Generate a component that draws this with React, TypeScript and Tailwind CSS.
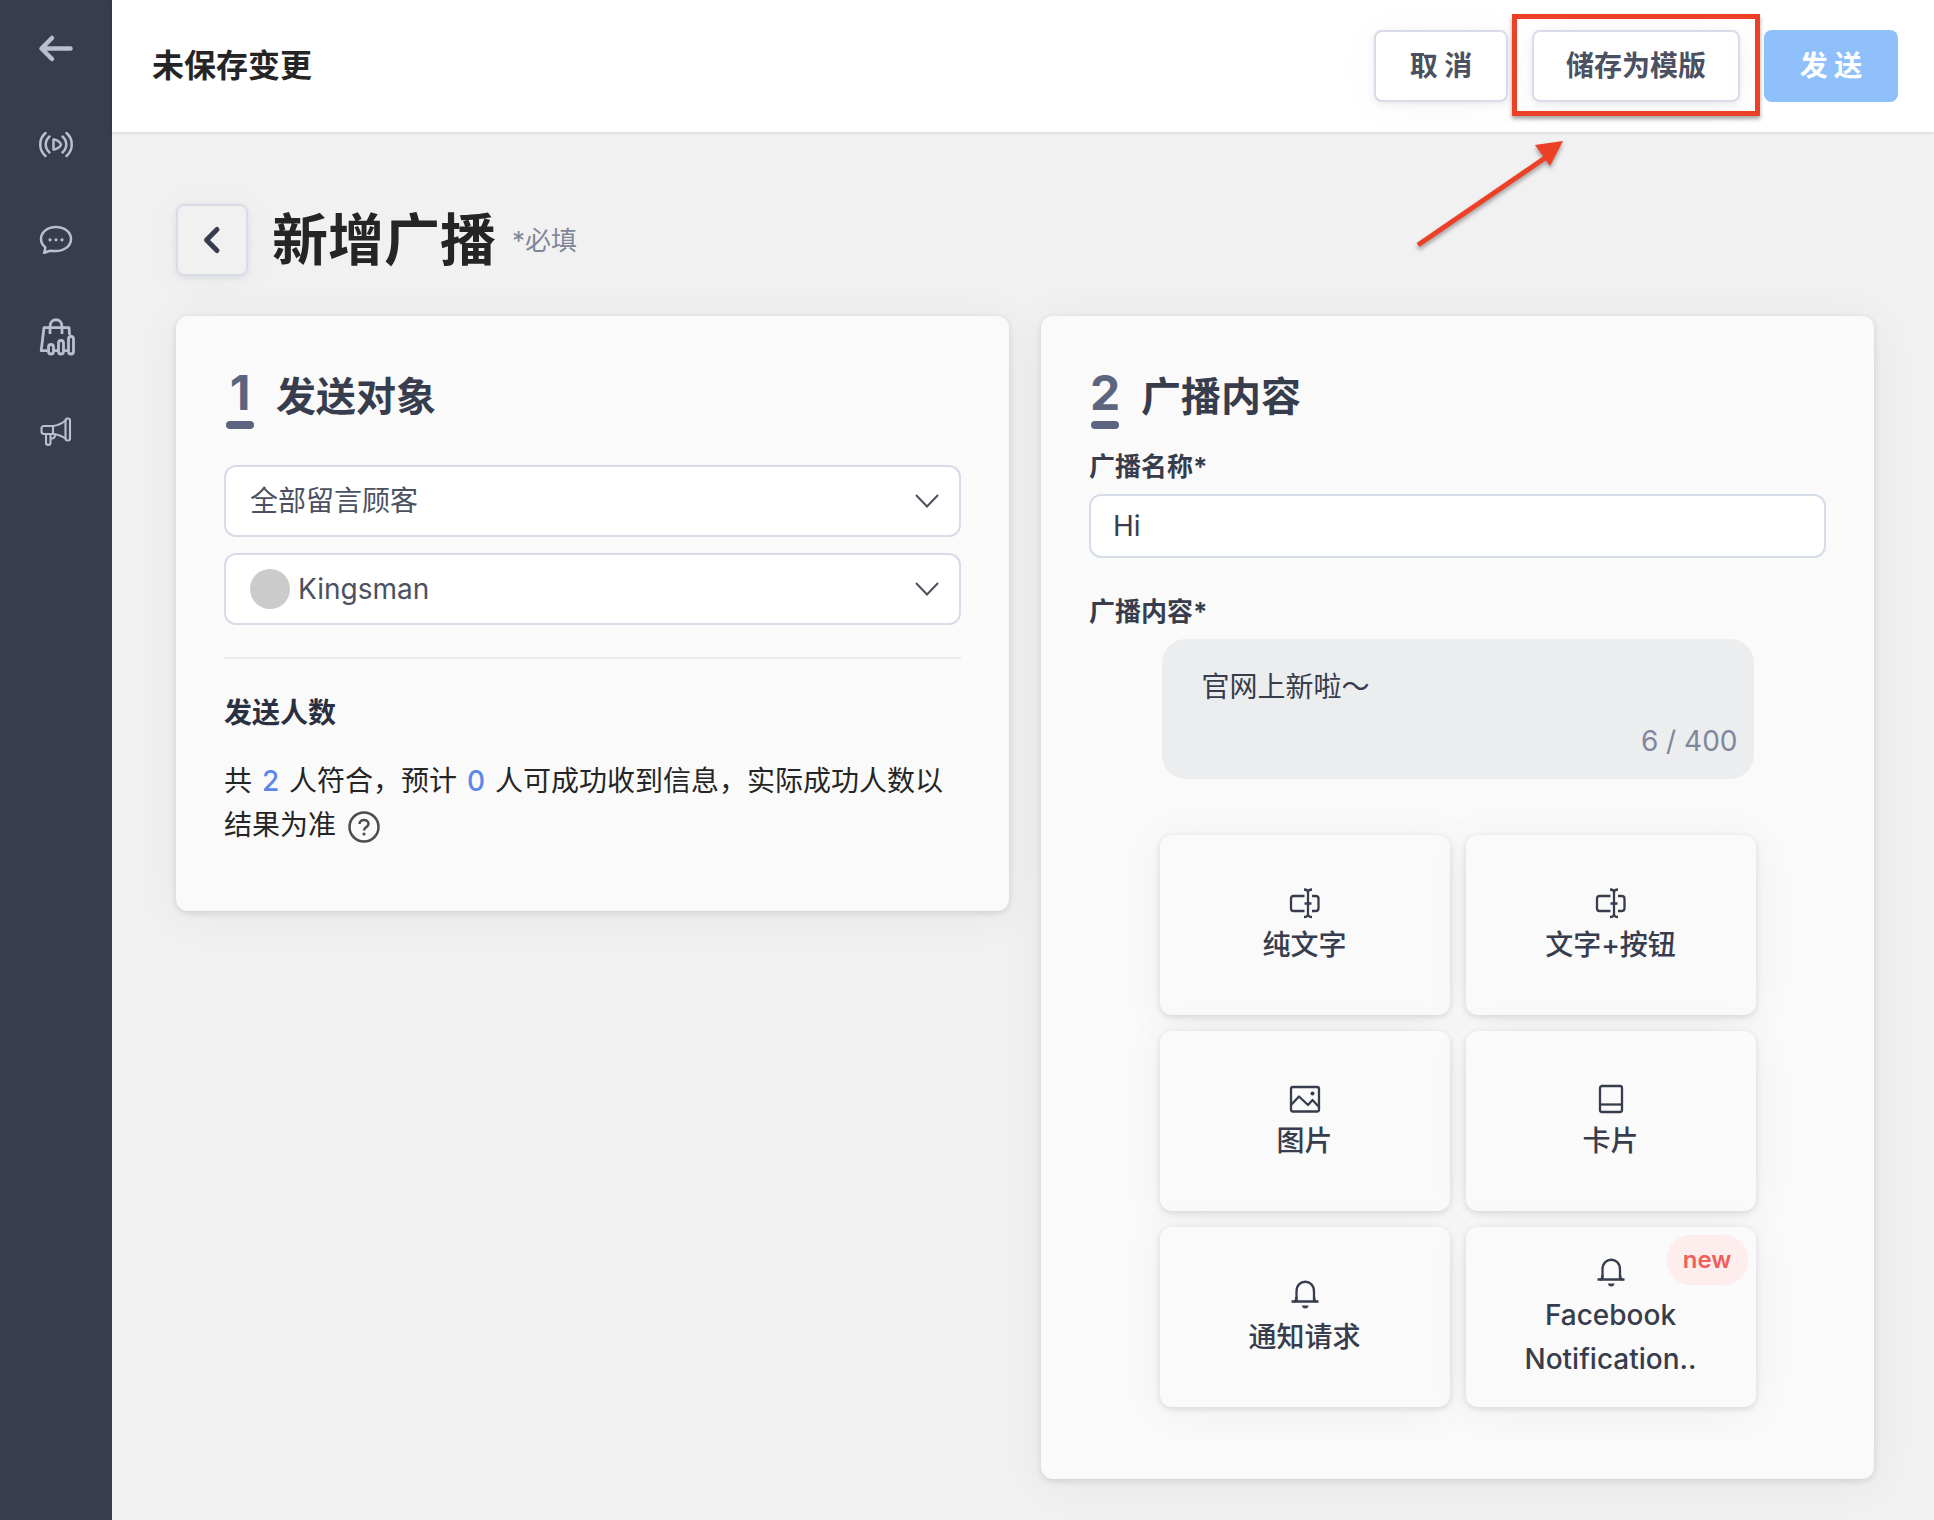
import type { ReactNode } from "react";

const cardShadow =
  "shadow-[0_2px_6px_rgba(40,44,56,0.14),0_4px_48px_rgba(40,44,56,0.05)]";
const buttonShadow =
  "shadow-[0_2px_6px_rgba(60,70,120,0.10),0_4px_48px_rgba(40,44,56,0.03)]";

function SideIcon({ children }: { children: ReactNode }) {
  return (
    <svg
      viewBox="0 0 40 40"
      className="size-10"
      fill="none"
      stroke="currentColor"
      strokeWidth="2.5"
      strokeLinecap="round"
      strokeLinejoin="round"
      aria-hidden="true"
    >
      {children}
    </svg>
  );
}

const navItems = [
  {
    label: "返回",
    icon: (
      <SideIcon>
        <path d="M16 10L5.5 20.5L16 31M6 20.5H34.5" strokeWidth="4.5" />
      </SideIcon>
    ),
  },
  {
    label: "直播",
    icon: (
      <SideIcon>
        <path d="M9.5 9C2.5 15 2.5 26 9.5 32M13.5 12.5C8.5 17 8.5 24 13.5 28.5" />
        <path d="M30.5 9C37.5 15 37.5 26 30.5 32M26.5 12.5C31.5 17 31.5 24 26.5 28.5" />
        <path d="M17.5 15.5V25.5C19.5 26 25 22.5 25 20.5S19.5 15 17.5 15.5Z" />
      </SideIcon>
    ),
  },
  {
    label: "聊天",
    icon: (
      <SideIcon>
        <path d="M8 32.8C8.8 31.2 9.3 29.3 9.3 27.3C6.5 25 5 22 5 19C5 12 11.7 7 20 7S35 12 35 19S28.3 31 20 31C18 31 16.3 30.8 14.6 30.8C12.5 31 10.5 32.3 8 32.8Z" />
        <g fill="currentColor" stroke="none">
          <circle cx="14" cy="19.8" r="1.6" />
          <circle cx="20" cy="19.8" r="1.6" />
          <circle cx="26" cy="19.8" r="1.6" />
        </g>
      </SideIcon>
    ),
  },
  {
    label: "商店",
    icon: (
      <SideIcon>
        <g strokeWidth="2.8" strokeLinecap="butt">
          <path d="M11.5 34.7H5.2L8 11.7H33L33.6 19M18 34.7H22M28 34.7H32" />
          <path d="M14 18V10.5C14 1.5 26 1.5 26 10.5V18" />
          <rect x="12.5" y="28.5" width="5" height="9.5" rx="2.5" />
          <rect x="22.5" y="24.5" width="5" height="13.5" rx="2.5" />
          <rect x="32.5" y="20.5" width="5" height="17.5" rx="2.5" />
        </g>
      </SideIcon>
    ),
  },
  {
    label: "推广",
    icon: (
      <SideIcon>
        <g strokeWidth="2.1">
          <path d="M17 14H8C6.5 14 5.5 15 5.5 16.5V19.5C5.5 21 6.5 22 8 22H17Z" />
          <path d="M17 14C22 13.5 26 11.5 29.5 8.5M17 22C22 22.5 26 24 29.5 26.5" />
          <rect x="29.5" y="6.5" width="4.5" height="22" rx="2" />
          <path d="M10 22V31C10 33.5 14.5 33.5 14.5 31V22M14.5 26.5H16C18 26.5 19 25 19 22.5" />
        </g>
      </SideIcon>
    ),
  },
];

function TileIcon({ children }: { children: ReactNode }) {
  return (
    <svg
      viewBox="0 0 32 32"
      className="size-8"
      fill="none"
      stroke="currentColor"
      strokeWidth="2.3"
      strokeLinejoin="round"
      aria-hidden="true"
    >
      {children}
    </svg>
  );
}

const textIcon = (
  <TileIcon>
    <path d="M15.5 9H4.5C3 9 2 10 2 11.5V21.5C2 23 3 24 4.5 24H15.5" />
    <path d="M23 9H26.5C28.5 9 29.5 10 29.5 11.5V21.5C29.5 23 28.5 24 26.5 24H23" />
    <path d="M19 5V28M15.5 16.5H22.5M15 2.5C17.5 2.5 19 3.5 19 5.5C19 3.5 20.5 2.5 23 2.5M15 30C17.5 30 19 29 19 27C19 29 20.5 30 23 30" />
  </TileIcon>
);

const bellIcon = (
  <TileIcon>
    <path d="M7.5 22V12.5C7.5 -0.5 25 -0.5 25 12.5V22M2.5 22.5H29.5" />
    <path d="M5 23C7 22 7.5 20 7.5 18M27.5 23C25.5 22 25 20 25 18" />
    <path d="M13 26.5H19.5C19.5 30.5 13 30.5 13 26.5Z" fill="currentColor" stroke="none" />
  </TileIcon>
);

const tiles = [
  { label: "纯文字", icon: textIcon },
  { label: "文字+按钮", icon: textIcon },
  {
    label: "图片",
    icon: (
      <TileIcon>
        <rect x="2" y="4" width="28" height="24.5" rx="2" />
        <path d="M2 22L10 13.5L19 22L23.5 17L30 24" />
        <circle cx="23.5" cy="10.5" r="2" fill="currentColor" stroke="none" />
      </TileIcon>
    ),
  },
  {
    label: "卡片",
    icon: (
      <TileIcon>
        <rect x="5" y="3" width="22" height="26" rx="2" />
        <path d="M5 21.5H27" />
      </TileIcon>
    ),
  },
  { label: "通知请求", icon: bellIcon },
  { label: "Facebook Notification..", icon: bellIcon, isNew: true },
];

function StepHeading({ step, title }: { step: string; title: string }) {
  return (
    <div className="flex items-start gap-5">
      <div className="flex w-8 flex-col items-center">
        <span className="text-5xl leading-14 font-bold text-[#5b6580]">
          {step}
        </span>
        <span className="h-2 w-7 rounded-full bg-[#5b6580]" />
      </div>
      <h2 className="text-[40px] leading-16 font-bold">{title}</h2>
    </div>
  );
}

function Chevron() {
  return (
    <svg
      viewBox="0 0 24 14"
      className="pointer-events-none absolute top-1/2 right-[22px] h-3.5 w-6 -translate-y-1/2"
      fill="none"
      stroke="#4b5160"
      strokeWidth="2"
      aria-hidden="true"
    >
      <path d="M1 1L12 12.5L23 1" />
    </svg>
  );
}

const selectClass =
  "h-18 w-full appearance-none rounded-xl border-2 border-[#d8dbe8] bg-white pr-16 text-[#4b5160]";

export default function App() {
  return (
    <div className="flex min-h-screen bg-[#f1f1f1] font-['Inter','Noto_Sans_CJK_SC',sans-serif] text-[28px] text-[#373d4c]">
      <nav className="w-28 shrink-0 bg-[#373d4c] text-[#b9bfcf]">
        {navItems.map((item) => (
          <a
            key={item.label}
            href="#"
            aria-label={item.label}
            className="flex h-24 items-center justify-center"
          >
            {item.icon}
          </a>
        ))}
      </nav>

      <div className="flex-1">
        <header className="flex h-[132px] items-center justify-between bg-white pr-9 pl-10 shadow-[0_1px_3px_rgba(0,0,0,0.12)]">
          <p className="text-[32px] font-bold text-[#252525]">未保存变更</p>
          <div className="flex gap-6 font-bold text-[#4b5160]">
            <button
              className={`h-18 w-[134px] rounded-lg border-2 border-[#d8dbe8] bg-white ${buttonShadow}`}
            >
              取 消
            </button>
            <div className="relative">
              <button
                className={`h-18 rounded-lg border-2 border-[#d8dbe8] bg-white px-8 ${buttonShadow}`}
              >
                储存为模版
              </button>
              <div className="pointer-events-none absolute -inset-x-5 -top-4 -bottom-3.5 border-[5px] border-[#ec4027] shadow-[0_3px_4px_rgba(0,0,0,0.35)]" />
              <svg
                viewBox="0 0 160 120"
                className="pointer-events-none absolute top-26 -left-31 h-[120px] w-40 drop-shadow-[0_3px_2px_rgba(0,0,0,0.35)]"
                aria-hidden="true"
              >
                <path d="M10 111L137 24" stroke="#ec4027" strokeWidth="5" />
                <path d="M155 7L127 11L142 32Z" fill="#ec4027" />
              </svg>
            </div>
            <button className="h-18 w-[134px] rounded-lg bg-[#8fc0fb] text-white">
              发 送
            </button>
          </div>
        </header>

        <main className="pt-18 pr-15 pb-10 pl-16">
          <div className="flex items-center">
            <button
              aria-label="上一页"
              className={`flex size-18 items-center justify-center rounded-lg border-2 border-[#d8dbe8] ${buttonShadow}`}
            >
              <svg
                viewBox="0 0 20 30"
                className="h-[30px] w-5"
                fill="none"
                stroke="currentColor"
                strokeWidth="5"
                strokeLinecap="round"
                strokeLinejoin="round"
                aria-hidden="true"
              >
                <path d="M15 4.5L4.5 15L15 25.5" />
              </svg>
            </button>
            <h1 className="ml-6 text-[56px] leading-18 font-bold text-[#252525]">
              新增广播
            </h1>
            <span className="ml-4 text-[26px] text-[#7f879b]">*必填</span>
          </div>

          <div className="mt-10 grid grid-cols-2 items-start gap-8">
            <section
              className={`rounded-xl bg-[#fafafa] px-12 pt-[49px] pb-16 ${cardShadow}`}
            >
              <StepHeading step="1" title="发送对象" />
              <div className="mt-9 flex flex-col gap-4">
                <div className="relative">
                  <select aria-label="发送对象" className={`${selectClass} pl-6`}>
                    <option>全部留言顾客</option>
                  </select>
                  <Chevron />
                </div>
                <div className="relative">
                  <select aria-label="粉丝专页" className={`${selectClass} pl-18`}>
                    <option>Kingsman</option>
                  </select>
                  <span className="absolute top-4 left-[26px] size-10 rounded-full bg-[#cbcbcb]" />
                  <Chevron />
                </div>
              </div>
              <hr className="mt-8 border-t-2 border-[#ebebeb]" />
              <h3 className="mt-8 leading-11 font-bold text-[#2b3040]">
                发送人数
              </h3>
              <p className="mt-6 leading-11 text-[#252525]">
                共{" "}
                <span className="px-0.5 font-medium text-[#5a87e8]">2</span>{" "}
                人符合，预计{" "}
                <span className="px-0.5 font-medium text-[#5a87e8]">0</span>{" "}
                人可成功收到信息，实际成功人数以结果为准
                <svg
                  viewBox="0 0 32 32"
                  className="ml-3 inline size-8"
                  fill="none"
                  stroke="#4d4d4d"
                  strokeWidth="2.5"
                  aria-hidden="true"
                >
                  <circle cx="16" cy="16" r="14.5" />
                  <path d="M11.5 13C11.5 7.5 20.5 7.5 20.5 13C20.5 16 16 16 16 19.5" />
                  <circle cx="16" cy="23" r="1.6" fill="#4d4d4d" stroke="none" />
                </svg>
              </p>
            </section>

            <section
              className={`rounded-xl bg-[#fafafa] px-12 pt-[49px] pb-18 ${cardShadow}`}
            >
              <StepHeading step="2" title="广播内容" />
              <label
                htmlFor="broadcast-name"
                className="mt-4 block text-[26px] leading-11 font-bold"
              >
                广播名称*
              </label>
              <input
                id="broadcast-name"
                defaultValue="Hi"
                className="mt-[5px] block h-16 w-full rounded-xl border-2 border-[#d5dde8] bg-white px-[22px]"
              />
              <h3 className="mt-8 text-[26px] leading-11 font-bold">
                广播内容*
              </h3>
              <div className="mx-auto mt-[5px] flex h-[140px] max-w-[592px] flex-col justify-between rounded-3xl bg-[#ecedef] py-4">
                <p className="px-10 leading-16">官网上新啦～</p>
                <p className="px-4 text-right leading-11 text-[#7f879b]">
                  6 / 400
                </p>
              </div>
              <div className="mx-auto mt-14 grid max-w-[596px] grid-cols-2 gap-4">
                {tiles.map((tile) => (
                  <button
                    key={tile.label}
                    className={`relative flex h-45 flex-col items-center justify-center rounded-xl bg-[#fafafa] px-10 leading-11 font-medium ${cardShadow}`}
                  >
                    <span className="flex h-10 items-center">{tile.icon}</span>
                    {tile.label}
                    {tile.isNew && (
                      <span className="absolute top-2 right-2 rounded-3xl bg-[#fdeeed] px-4 text-2xl leading-[50px] font-semibold text-[#f05f5b]">
                        new
                      </span>
                    )}
                  </button>
                ))}
              </div>
            </section>
          </div>
        </main>
      </div>
    </div>
  );
}
